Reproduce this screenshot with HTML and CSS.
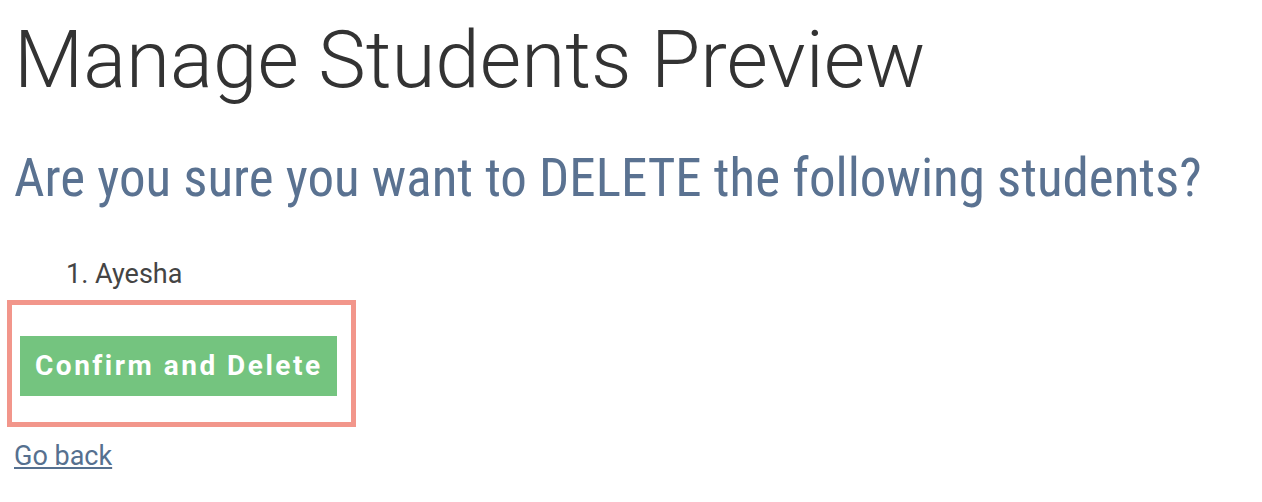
FILE: index.html
```html
<!DOCTYPE html>
<html lang="en">
<head>
<meta charset="utf-8">
<title>Manage Students Preview</title>
<link rel="stylesheet" href="styles.css">
</head>
<body>
<main class="page">
  <h1 class="title">Manage Students Preview</h1>
  <h2 class="question"><span class="question-text">Are you sure you want to DELETE the following students?</span></h2>
  <ol class="student-list">
    <li>Ayesha</li>
  </ol>
  <div class="confirm-box">
    <button class="confirm-btn" type="button">Confirm and Delete</button>
  </div>
  <p class="back"><a href="#" class="back-link">Go back</a></p>
</main>
</body>
</html>
```
FILE: styles.css
```css
html, body {
  margin: 0;
  padding: 0;
  background: #ffffff;
}
.page {
  padding: 0 14px;
  font-family: Roboto, "Liberation Sans", sans-serif;
}
.title {
  margin: 20px 0 0;
  font-size: 80px;
  line-height: 80px;
  font-weight: 300;
  color: #333333;
}
.question {
  margin: 52px 0 0;
  font-size: 53px;
  line-height: 53px;
  font-weight: 400;
  color: #5a7291;
  white-space: nowrap;
}
.question-text {
  display: inline-block;
  font-stretch: 75%;
}
.student-list {
  margin: 56px 0 0;
  padding: 0 0 0 52px;
  list-style-position: inside;
  font-size: 27px;
  line-height: 27px;
  color: #444444;
}
.confirm-box {
  display: inline-block;
  margin: 12px 0 0 -7px;
  border: 5px solid #f2968b;
  padding: 31px 14px 26px 8px;
}
.confirm-btn {
  display: block;
  height: 60px;
  margin: 0;
  padding: 0 14px 0 15px;
  border: none;
  background: #74c47f;
  color: #ffffff;
  font-family: Roboto, "Liberation Sans", sans-serif;
  font-size: 28px;
  font-weight: 700;
  line-height: 60px;
  letter-spacing: 2.5px;
}
.back {
  margin: 16px 0 0;
  font-size: 27px;
  line-height: 27px;
}
.back-link {
  color: #56708f;
  text-decoration: underline;
}
```
